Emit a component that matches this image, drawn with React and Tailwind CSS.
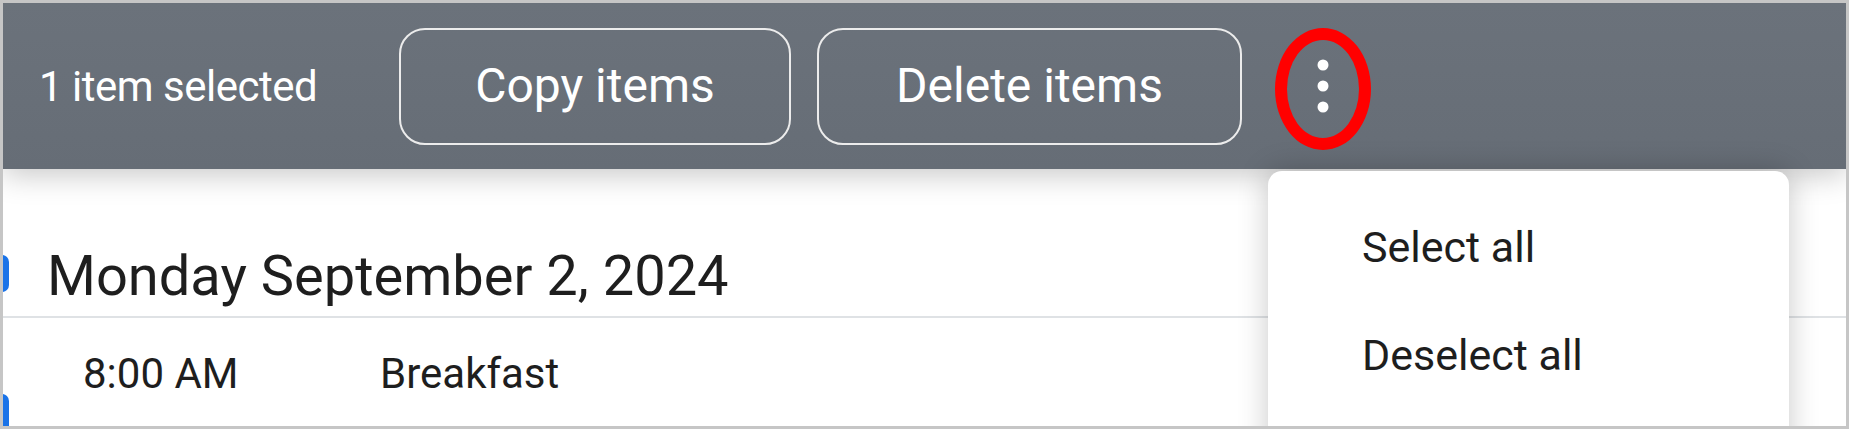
export default function App() {
  return (
    <div
      className="relative w-[1849px] h-[429px] overflow-hidden bg-white border-[3px] border-[#c6c6c6]"
      style={{ fontFamily: 'Roboto, "Liberation Sans", sans-serif' }}
    >
      {/* selection toolbar */}
      <div className="relative z-10 flex items-center h-[166px] pl-[36px] bg-gradient-to-b from-[#6b727b] to-[#666d76] shadow-[0_6px_28px_rgba(0,0,0,0.22)]">
        <span className="w-[360px] shrink-0 text-[42px] text-white tracking-[-0.5px]">1 item selected</span>
        <div className="flex items-center gap-[26px]">
          <button className="w-[392px] h-[117px] rounded-[26px] border-2 border-[#ececec] text-[48px] text-white">
            Copy items
          </button>
          <button className="w-[425px] h-[117px] rounded-[26px] border-2 border-[#ececec] text-[48px] text-white">
            Delete items
          </button>
        </div>
        <div className="relative ml-[33px] w-[96px] h-[108px] shrink-0 flex items-center justify-center">
          <svg width="14" height="56" viewBox="0 0 14 56" className="text-white">
            <circle cx="7" cy="7" r="5.5" fill="currentColor" />
            <circle cx="7" cy="28" r="5.5" fill="currentColor" />
            <circle cx="7" cy="49" r="5.5" fill="currentColor" />
          </svg>
          <div className="absolute left-0 right-0 -top-[4px] -bottom-[10px] rounded-[50%] border-[12px] border-[#ff0000]" />
        </div>
      </div>

      {/* agenda list */}
      <div className="relative">
        <div className="absolute left-[-8px] top-[86px] w-[14px] h-[37px] rounded-full bg-[#1a73e8]" />
        <div className="absolute left-[-8px] top-[225px] w-[14px] h-[40px] rounded-full bg-[#1a73e8]" />
        <div className="pt-[74px] pb-[6px] pl-[44px] border-b-2 border-[#dfe2e5]">
          <h2 className="text-[56px] leading-[1.2] text-[#1e1e1e]">Monday September 2, 2024</h2>
        </div>
        <div className="flex pt-[31px] text-[42px] leading-[1.2] text-[#1e1e1e]">
          <span className="pl-[80px] w-[377px] shrink-0">8:00 AM</span>
          <span>Breakfast</span>
        </div>
      </div>

      {/* overflow menu */}
      <div className="absolute z-20 left-[1265px] top-[168px] w-[521px] h-[300px] bg-white rounded-t-[14px] shadow-[0_0_30px_rgba(0,0,0,0.22)]">
        <div className="flex flex-col pt-[48px] pl-[94px] text-[43px] text-[#1e1e1e]">
          <span className="h-[108px] leading-[56px]">Select all</span>
          <span className="leading-[56px]">Deselect all</span>
        </div>
      </div>
    </div>
  )
}
